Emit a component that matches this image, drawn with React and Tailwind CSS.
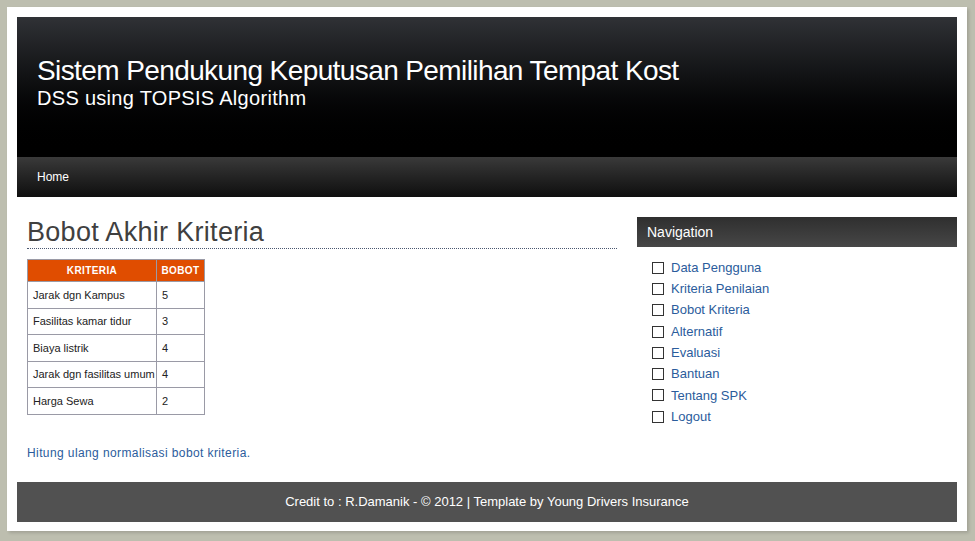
import React from "react";

const kriteria = [
  { nama: "Jarak dgn Kampus", bobot: 5 },
  { nama: "Fasilitas kamar tidur", bobot: 3 },
  { nama: "Biaya listrik", bobot: 4 },
  { nama: "Jarak dgn fasilitas umum", bobot: 4 },
  { nama: "Harga Sewa", bobot: 2 },
];

const menu = [
  "Data Pengguna",
  "Kriteria Penilaian",
  "Bobot Kriteria",
  "Alternatif",
  "Evaluasi",
  "Bantuan",
  "Tentang SPK",
  "Logout",
];

export default function App() {
  return (
    <div className="min-h-[541px] bg-[#bdbeaf] pt-[7px] pl-[7px] font-['Liberation_Sans',Arial,sans-serif]">
      <div className="w-[960px] h-[524px] bg-white p-[10px] shadow-[2px_2px_3px_rgba(0,0,0,0.15)]">
        {/* header */}
        <div className="h-[140px] bg-linear-to-b from-[#303236] to-[#000000] pl-[20px] pt-[38px]">
          <h1 className="text-white text-[28px] leading-[32px] tracking-[-0.6px]">
            Sistem Pendukung Keputusan Pemilihan Tempat Kost
          </h1>
          <p className="text-white text-[20px] leading-[24px] tracking-[0.3px] mt-[-1px]">DSS using TOPSIS Algorithm</p>
        </div>
        <div className="h-[40px] bg-linear-to-b from-[#3a3a3a] to-[#0f0f0f] pl-[20px] flex items-center">
          <span className="text-white text-[12px]">Home</span>
        </div>

        {/* content */}
        <div className="flex pt-[20px] h-[285px]">
          <div className="w-[590px] ml-[10px]">
            <h2 className="text-[#404040] text-[27px] leading-[30px] tracking-[0.3px] border-b border-dotted border-[#4a5670] pb-[1px]">
              Bobot Akhir Kriteria
            </h2>
            <table className="mt-[10px] border-collapse text-[11px] text-[#222]">
              <thead>
                <tr className="h-[22px] bg-[#e04d00] text-white text-[10px] font-bold">
                  <th className="w-[129px] border border-[#9a9aa6] tracking-[0.4px]">KRITERIA</th>
                  <th className="w-[48px] border border-[#9a9aa6] px-[4px] tracking-[0.4px]">BOBOT</th>
                </tr>
              </thead>
              <tbody>
                {kriteria.map((k) => (
                  <tr key={k.nama} className="h-[26.6px]">
                    <td className="border border-[#9a9aa6] pl-[5px]">{k.nama}</td>
                    <td className="border border-[#9a9aa6] pl-[5px]">{k.bobot}</td>
                  </tr>
                ))}
              </tbody>
            </table>
            <p className="mt-[29px] text-[12px] tracking-[0.4px] text-[#2b5c9c]">
              Hitung ulang normalisasi bobot kriteria.
            </p>
          </div>

          <div className="w-[320px] ml-[20px]">
            <div className="h-[30px] bg-linear-to-b from-[#2f2f2f] to-[#474747] pl-[10px] flex items-center">
              <span className="text-white text-[14px]">Navigation</span>
            </div>
            <ul className="mt-[10px] pl-[15px]">
              {menu.map((m) => (
                <li key={m} className="h-[21.3px] flex items-center">
                  <span className="w-[12px] h-[12px] border border-[#333] mr-[7px]" />
                  <a className="text-[13px] text-[#2b5c9c]">{m}</a>
                </li>
              ))}
            </ul>
          </div>
        </div>

        {/* footer */}
        <div className="h-[40px] bg-[#515151] flex items-center justify-center">
          <span className="text-white text-[13px]">
            Credit to : R.Damanik - © 2012 | Template by Young Drivers Insurance
          </span>
        </div>
      </div>
    </div>
  );
}
